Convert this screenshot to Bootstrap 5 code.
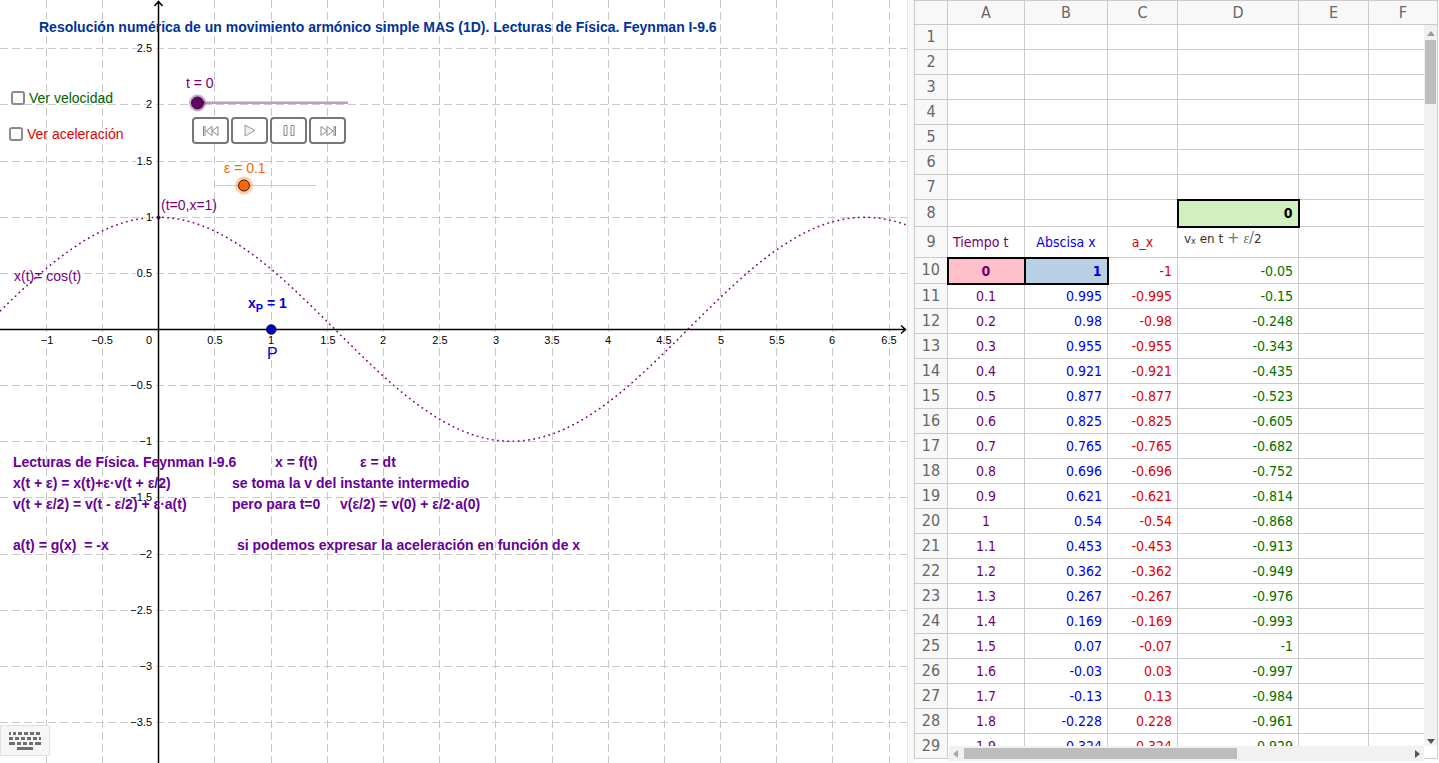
<!DOCTYPE html>
<html lang="es">
<head>
<meta charset="utf-8">
<title>Resolución numérica MAS</title>
<link rel="stylesheet" href="https://cdn.jsdelivr.net/npm/bootstrap@5.3.0/dist/css/bootstrap.min.css">
<style>
html,body{height:763px;overflow:hidden;background:#fff;font-family:"Liberation Sans",Arial,sans-serif}
.app-shell{width:1439px;height:763px}
.graph-pane{width:907px;height:763px;flex:none;overflow:hidden}
.graph-svg{display:block;width:907px;height:763px}
.pane-divider{width:7px;flex:none;background:#f8f8f8;border-left:1px solid #e2e2e2}
.sheet-pane{width:525px;height:763px;flex:none;overflow:hidden}
.gl{stroke:#c9c9c9;stroke-width:1;stroke-dasharray:8 4;fill:none}
.ax{stroke:#000;stroke-width:1.5;fill:none}
.nl{font:11px "Liberation Sans",Arial,sans-serif;fill:#000;paint-order:stroke;stroke:#fff;stroke-width:3px}
.tx{font:14px "Liberation Sans",Arial,sans-serif}
.bd{font:bold 14px "Liberation Sans",Arial,sans-serif;fill:#660099;white-space:pre}
.title-t{font:bold 14px "Liberation Sans",Arial,sans-serif;fill:#003399}
.ggb-check{width:14px;height:14px;margin:0;border:2px solid #8a8a8a;border-radius:3px;background:#fff;display:block;appearance:none}
.chk-a{left:11px;top:91px}
.chk-b{left:9px;top:127px}
.ctl-group{left:192px;top:117px;gap:2px}
.ctl-btn{width:37px;height:27px;padding:0;border:2px solid #777;border-radius:4px;background:#fff;line-height:0}
.kb-btn{left:0;top:725px;width:50px;height:31px;background:#f6f6f6;border:1px solid #e0e0e0;padding:0;border-radius:0 2px 2px 0}
.sheet{table-layout:fixed;width:523px;margin:0;font:14px "DejaVu Sans Condensed","DejaVu Sans",sans-serif;border-collapse:collapse;--bs-border-color:#cbcbcb}
.sheet.sheet>*>*>*{padding:0 5px;vertical-align:middle;height:25px;line-height:14px;border:1px solid #cbcbcb;overflow:hidden;white-space:nowrap;box-shadow:none;background:#fff}
.sheet.sheet>thead>tr>*{background:#f8f8f8;font:16px "DejaVu Sans Condensed","DejaVu Sans",sans-serif;color:#666;text-align:center;height:24px;font-weight:400;border-top:0;padding:0}
.sheet.sheet>tbody>tr>th{background:#f8f8f8;font:16px "DejaVu Sans Condensed","DejaVu Sans",sans-serif;color:#666;text-align:center;font-weight:400;padding:0 0 2px}
.sheet.sheet>tbody>tr.h27>*{height:27px}
.sheet.sheet>tbody>tr.h31>*{height:31px}
.sheet.sheet>tbody>tr.h26>*{height:26px}
.ca{text-align:center;color:#700070}
.cb{text-align:right;color:#0000e6}
.cc{text-align:right;color:#e00000}
.cd{text-align:right;color:#007000}
.sheet.sheet>tbody>tr>td.fa{background:#ffc0cb;border:2px solid #000;font-weight:700}
.sheet.sheet>tbody>tr>td.fb{background:#b8cfe4;border:2px solid #000;font-weight:700}
.sheet.sheet>tbody>tr>td.fd{background:#d0f0c0;border:2px solid #000;font-weight:700;color:#000;text-align:right}
.vx{font:12px "DejaVu Sans",sans-serif;color:#333;position:relative;top:-4px;display:inline-block;padding-left:1px;white-space:nowrap}
.vx sub{font-size:8px;bottom:-.1em;top:auto}
.vx i{font-family:"Liberation Serif",serif;font-size:14px;color:#666}
.vx span{color:#777;font-size:15px}
.vbar{left:510px;top:25px;width:13px;height:721px;background:#f1f1f1}
.vthumb{left:511px;top:40px;width:11px;height:64px;background:#bdbdbd}
.hbar{left:35px;top:746px;width:475px;height:15px;background:#f1f1f1}
.hthumb{left:50px;top:748px;width:273px;height:11px;background:#bdbdbd}
.arr{width:0;height:0;border:4px solid transparent}
.a-up{left:513px;top:31px;border-top:0;border-bottom:5px solid #9a9a9a}
.a-dn{left:513px;top:739px;border-bottom:0;border-top:5px solid #555}
.a-lf{left:39px;top:750px;border-left:0;border-right:5px solid #a8a8a8}
.a-rt{left:501px;top:750px;border-right:0;border-left:5px solid #555}
</style>
</head>
<body>
<div class="app-shell d-flex">
  <div class="graph-pane position-relative">
    <svg class="graph-svg" viewBox="0 0 907 763" xmlns="http://www.w3.org/2000/svg">
      <g class="gl">
        <path d="M46.5 0V763M102.5 0V763M214.5 0V763M271.5 0V763M327.5 0V763M383.5 0V763M439.5 0V763M495.5 0V763M552.5 0V763M608.5 0V763M664.5 0V763M720.5 0V763M776.5 0V763M832.5 0V763M889.5 0V763"/>
        <path d="M0 48.5H907M0 104.5H907M0 161.5H907M0 217.5H907M0 273.5H907M0 385.5H907M0 441.5H907M0 497.5H907M0 554.5H907M0 610.5H907M0 666.5H907M0 722.5H907"/>
      </g>
      <path id="curve" d="" fill="none" stroke="#800080" stroke-width="1.5" stroke-dasharray="1.8 3.4"/>
      <path class="ax" d="M158.5 763V1M154.5 6L158.5 1.5L162.5 6M0 329.5H906M901 325.5L905.5 329.5L901 333.5"/>
      <g class="nl" text-anchor="middle">
        <text x="47" y="344">−1</text><text x="102" y="344">−0.5</text><text x="149" y="344">0</text>
        <text x="215" y="344">0.5</text><text x="271" y="344">1</text><text x="328" y="344">1.5</text>
        <text x="383" y="344">2</text><text x="440" y="344">2.5</text><text x="496" y="344">3</text>
        <text x="552" y="344">3.5</text><text x="608" y="344">4</text><text x="664" y="344">4.5</text>
        <text x="721" y="344">5</text><text x="777" y="344">5.5</text><text x="832" y="344">6</text><text x="889" y="344">6.5</text>
      </g>
      <g class="nl" text-anchor="end">
        <text x="152" y="52">2.5</text><text x="152" y="108">2</text><text x="152" y="165">1.5</text>
        <text x="152" y="221">1</text><text x="152" y="277">0.5</text><text x="152" y="389">−0.5</text>
        <text x="152" y="445">−1</text><text x="152" y="501">−1.5</text><text x="152" y="558">−2</text>
        <text x="152" y="614">−2.5</text><text x="152" y="670">−3</text><text x="152" y="726">−3.5</text>
      </g>
      <text class="title-t" x="39" y="32">Resolución numérica de un movimiento armónico simple MAS (1D). Lecturas de Física. Feynman I-9.6</text>
      <text class="tx" x="29" y="103" fill="#006400">Ver velocidad</text>
      <text class="tx" x="27" y="139" fill="#e00000">Ver aceleración</text>
      <text class="tx" x="186" y="88" fill="#760076">t = 0</text>
      <path d="M197 102.7H348" stroke="#c49ac4" stroke-width="2.5"/>
      <circle cx="197.5" cy="103" r="8.5" fill="#660066" fill-opacity=".35"/>
      <circle cx="197.5" cy="103" r="6" fill="#660066" stroke="#222" stroke-width="1"/>
      <text class="tx" x="224" y="173" fill="#ff6600">ε = 0.1</text>
      <path d="M214.5 185.5H316" stroke="#ffbf94" stroke-width="1"/>
      <circle cx="244" cy="185.5" r="9" fill="#ff6600" fill-opacity=".35"/>
      <circle cx="244" cy="185.5" r="5.5" fill="#ff6600" stroke="#222" stroke-width="1"/>
      <text class="tx" x="161" y="210" fill="#760076">(t=0,x=1)</text>
      <circle cx="158.5" cy="217.5" r="2" fill="#441144"/>
      <text class="tx" x="14" y="281" fill="#760076">x(t)= cos(t)</text>
      <text x="248" y="308" fill="#0000e6" style="font:bold 14px 'Liberation Sans',sans-serif">x<tspan dy="4" font-size="11">P</tspan><tspan dy="-4"> = 1</tspan></text>
      <circle cx="271.3" cy="329.5" r="4.8" fill="#0000cc" stroke="#000" stroke-width=".8"/>
      <text x="267" y="359" fill="#0000e6" style="font:16px 'Liberation Sans',sans-serif">P</text>
      <text class="bd" x="13" y="467">Lecturas de Física. Feynman I-9.6</text>
      <text class="bd" x="275" y="467">x = f(t)</text>
      <text class="bd" x="360" y="467">ε = dt</text>
      <text class="bd" x="13" y="488">x(t + ε) = x(t)+ε·v(t + ε/2)</text>
      <text class="bd" x="232" y="488">se toma la v del instante intermedio</text>
      <text class="bd" x="13" y="509">v(t + ε/2) = v(t - ε/2) + ε·a(t)</text>
      <text class="bd" x="232" y="509">pero para t=0</text>
      <text class="bd" x="340" y="509">v(ε/2) = v(0) + ε/2·a(0)</text>
      <text class="bd" x="13" y="550">a(t) = g(x)  = -x</text>
      <text class="bd" x="237" y="550">si podemos expresar la aceleración en función de x</text>
    </svg>
    <input class="ggb-check position-absolute chk-a" type="checkbox" aria-label="Ver velocidad">
    <input class="ggb-check position-absolute chk-b" type="checkbox" aria-label="Ver aceleración">
    <div class="ctl-group position-absolute d-flex">
      <button class="ctl-btn" type="button" aria-label="inicio"><svg width="16" height="12" viewBox="0 0 16 12" fill="none" stroke="#888"><path d="M.5 1V11M2 1V11M9 1.5L3 6L9 10.5ZM15 1.5L9 6L15 10.5Z"/></svg></button>
      <button class="ctl-btn" type="button" aria-label="reproducir"><svg width="12" height="13" viewBox="0 0 12 13" fill="#eee" stroke="#999"><path d="M1 1L11 6.5L1 12Z"/></svg></button>
      <button class="ctl-btn" type="button" aria-label="pausa"><svg width="12" height="11" viewBox="0 0 12 11" fill="none" stroke="#888"><path d="M1 .5H4V10.5H1ZM8 .5H11V10.5H8Z"/></svg></button>
      <button class="ctl-btn" type="button" aria-label="fin"><svg width="16" height="12" viewBox="0 0 16 12" fill="none" stroke="#888"><path d="M1 1.5L7 6L1 10.5ZM7 1.5L13 6L7 10.5ZM14 1V11M15.5 1V11"/></svg></button>
    </div>
    <button class="kb-btn position-absolute" type="button" aria-label="teclado"><svg width="33" height="18" viewBox="0 0 33 18" fill="#6e6e6e"><path d="M0 0h2v3H0zM4 0h3v3H4zM9 0h4v3H9zM15 0h4v3h-4zM21 0h4v3h-4zM27 0h4v3h-4zM0 5h4v3H0zM6 5h4v3H6zM12 5h4v3h-4zM18 5h4v3h-4zM24 5h4v3h-4zM30 5h2v3h-2zM0 10h6v3H0zM8 10h4v3H8zM14 10h4v3h-4zM20 10h4v3h-4zM26 10h6v3h-6zM8 15h16v3H8z"/></svg></button>
  </div>
  <div class="pane-divider"></div>
  <div class="sheet-pane position-relative">
    <table class="table table-bordered sheet">
      <colgroup><col style="width:33px"><col style="width:77px"><col style="width:83px"><col style="width:70px"><col style="width:121px"><col style="width:70px"><col style="width:69px"></colgroup>
      <thead><tr><th></th><th>A</th><th>B</th><th>C</th><th>D</th><th>E</th><th>F</th></tr></thead>
      <tbody>
        <tr><th>1</th><td></td><td></td><td></td><td></td><td></td><td></td></tr>
        <tr><th>2</th><td></td><td></td><td></td><td></td><td></td><td></td></tr>
        <tr><th>3</th><td></td><td></td><td></td><td></td><td></td><td></td></tr>
        <tr><th>4</th><td></td><td></td><td></td><td></td><td></td><td></td></tr>
        <tr><th>5</th><td></td><td></td><td></td><td></td><td></td><td></td></tr>
        <tr><th>6</th><td></td><td></td><td></td><td></td><td></td><td></td></tr>
        <tr><th>7</th><td></td><td></td><td></td><td></td><td></td><td></td></tr>
        <tr class="h27"><th>8</th><td></td><td></td><td></td><td class="fd">0</td><td></td><td></td></tr>
        <tr class="h31"><th>9</th><td class="ca text-start">Tiempo t</td><td class="cb text-center">Abscisa x</td><td class="cc text-center">a_x</td><td><span class="vx">v<sub>x</sub> en t <span>+</span> <i>ε</i><span>/</span>2</span></td><td></td><td></td></tr>
        <tr class="h26"><th>10</th><td class="ca fa">0</td><td class="cb fb">1</td><td class="cc">-1</td><td class="cd">-0.05</td><td></td><td></td></tr>
        <tr><th>11</th><td class="ca">0.1</td><td class="cb">0.995</td><td class="cc">-0.995</td><td class="cd">-0.15</td><td></td><td></td></tr>
        <tr><th>12</th><td class="ca">0.2</td><td class="cb">0.98</td><td class="cc">-0.98</td><td class="cd">-0.248</td><td></td><td></td></tr>
        <tr><th>13</th><td class="ca">0.3</td><td class="cb">0.955</td><td class="cc">-0.955</td><td class="cd">-0.343</td><td></td><td></td></tr>
        <tr><th>14</th><td class="ca">0.4</td><td class="cb">0.921</td><td class="cc">-0.921</td><td class="cd">-0.435</td><td></td><td></td></tr>
        <tr><th>15</th><td class="ca">0.5</td><td class="cb">0.877</td><td class="cc">-0.877</td><td class="cd">-0.523</td><td></td><td></td></tr>
        <tr><th>16</th><td class="ca">0.6</td><td class="cb">0.825</td><td class="cc">-0.825</td><td class="cd">-0.605</td><td></td><td></td></tr>
        <tr><th>17</th><td class="ca">0.7</td><td class="cb">0.765</td><td class="cc">-0.765</td><td class="cd">-0.682</td><td></td><td></td></tr>
        <tr><th>18</th><td class="ca">0.8</td><td class="cb">0.696</td><td class="cc">-0.696</td><td class="cd">-0.752</td><td></td><td></td></tr>
        <tr><th>19</th><td class="ca">0.9</td><td class="cb">0.621</td><td class="cc">-0.621</td><td class="cd">-0.814</td><td></td><td></td></tr>
        <tr><th>20</th><td class="ca">1</td><td class="cb">0.54</td><td class="cc">-0.54</td><td class="cd">-0.868</td><td></td><td></td></tr>
        <tr><th>21</th><td class="ca">1.1</td><td class="cb">0.453</td><td class="cc">-0.453</td><td class="cd">-0.913</td><td></td><td></td></tr>
        <tr><th>22</th><td class="ca">1.2</td><td class="cb">0.362</td><td class="cc">-0.362</td><td class="cd">-0.949</td><td></td><td></td></tr>
        <tr><th>23</th><td class="ca">1.3</td><td class="cb">0.267</td><td class="cc">-0.267</td><td class="cd">-0.976</td><td></td><td></td></tr>
        <tr><th>24</th><td class="ca">1.4</td><td class="cb">0.169</td><td class="cc">-0.169</td><td class="cd">-0.993</td><td></td><td></td></tr>
        <tr><th>25</th><td class="ca">1.5</td><td class="cb">0.07</td><td class="cc">-0.07</td><td class="cd">-1</td><td></td><td></td></tr>
        <tr><th>26</th><td class="ca">1.6</td><td class="cb">-0.03</td><td class="cc">0.03</td><td class="cd">-0.997</td><td></td><td></td></tr>
        <tr><th>27</th><td class="ca">1.7</td><td class="cb">-0.13</td><td class="cc">0.13</td><td class="cd">-0.984</td><td></td><td></td></tr>
        <tr><th>28</th><td class="ca">1.8</td><td class="cb">-0.228</td><td class="cc">0.228</td><td class="cd">-0.961</td><td></td><td></td></tr>
        <tr><th>29</th><td class="ca">1.9</td><td class="cb">-0.324</td><td class="cc">0.324</td><td class="cd">-0.929</td><td></td><td></td></tr>
      </tbody>
    </table>
    <div class="vbar position-absolute"></div><div class="vthumb position-absolute"></div>
    <div class="hbar position-absolute"></div><div class="hthumb position-absolute"></div>
    <div class="arr a-up position-absolute"></div><div class="arr a-dn position-absolute"></div>
    <div class="arr a-lf position-absolute"></div><div class="arr a-rt position-absolute"></div>
  </div>
</div>
<script>
  var d='';
  for(var px=0;px<=907;px+=2){var t=(px-158.3)/112.4;d+=(px?'L':'M')+px+' '+(329.3-112*Math.cos(t)).toFixed(2);}
  document.getElementById('curve').setAttribute('d',d);
</script>
<script src="https://cdn.jsdelivr.net/npm/bootstrap@5.3.0/dist/js/bootstrap.bundle.min.js"></script>
</body>
</html>
